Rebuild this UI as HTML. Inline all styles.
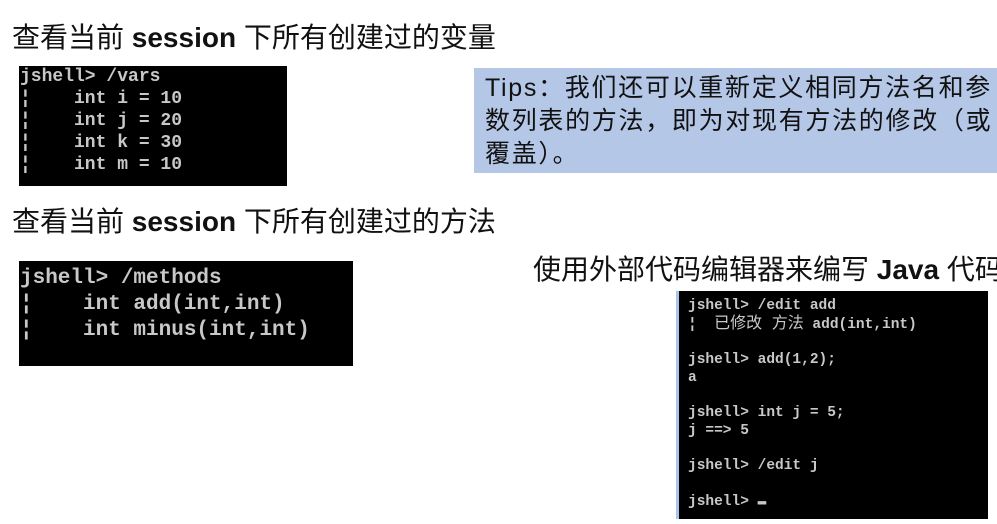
<!DOCTYPE html>
<html><head><meta charset="utf-8"><style>
body{margin:0;width:997px;height:524px;background:#fff;position:relative;overflow:hidden;font-family:"Liberation Sans","Noto Sans CJK SC",sans-serif}
.h{position:absolute;font-size:28px;color:#111;white-space:nowrap;line-height:32px}
.h b{font-weight:bold}
.t{position:absolute;background:#000;color:#c8c8c8;font-family:"Liberation Mono","Noto Sans CJK SC",monospace;font-weight:bold;white-space:pre;box-sizing:border-box}
</style></head><body>
<div class="h" style="left:12px;top:22px">查看当前 <b>session</b> 下所有创建过的变量</div>
<div class="t" style="left:19px;top:66px;width:268px;height:120px;font-size:18px;line-height:22px;padding:0 0 0 1px">jshell&gt; /vars
¦    int i = 10
¦    int j = 20
¦    int k = 30
¦    int m = 10</div>
<div style="position:absolute;left:474px;top:68px;width:523px;height:105px;background:#b4c7e7"></div>
<div style="position:absolute;left:485px;top:72px;width:540px;font-size:25px;letter-spacing:1.7px;line-height:33px;color:#111;white-space:nowrap">Tips：我们还可以重新定义相同方法名和参<br>数列表的方法，即为对现有方法的修改（或<br>覆盖）。</div>
<div class="h" style="left:12px;top:206px">查看当前 <b>session</b> 下所有创建过的方法</div>
<div class="t" style="left:19px;top:261px;width:334px;height:105px;font-size:21px;line-height:26px;padding:5px 0 0 1px">jshell&gt; /methods
¦    int add(int,int)
¦    int minus(int,int)</div>
<div class="h" style="left:533px;top:254px">使用外部代码编辑器来编写 <b>Java</b> 代码</div>
<div class="t" style="left:676px;top:291px;width:312px;height:228px;font-size:14.5px;line-height:17.7px;padding:7px 0 0 9px;border-left:3px solid #a9c6e8">jshell&gt; /edit add
¦  <span style="font-weight:normal;font-size:16px">已修改 方法</span> add(int,int)

jshell&gt; add(1,2);
a

jshell&gt; int j = 5;
j ==&gt; 5

jshell&gt; /edit j

jshell&gt; ▬</div>
</body></html>
